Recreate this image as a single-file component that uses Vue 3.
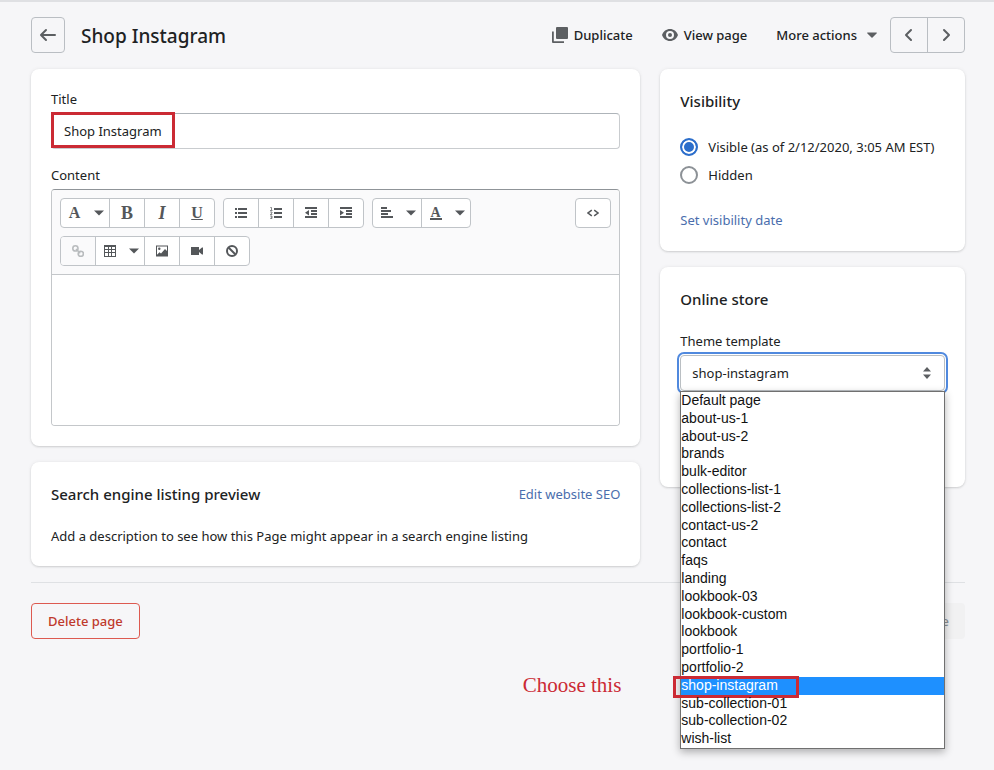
<script setup>
import { ref } from 'vue'

const title = ref('Shop Instagram')
const content = ref('')
const visibility = ref('visible')
const template = ref('shop-instagram')
const templates = [
  'Default page', 'about-us-1', 'about-us-2', 'brands', 'bulk-editor',
  'collections-list-1', 'collections-list-2', 'contact-us-2', 'contact', 'faqs',
  'landing', 'lookbook-03', 'lookbook-custom', 'lookbook', 'portfolio-1',
  'portfolio-2', 'shop-instagram', 'sub-collection-01', 'sub-collection-02', 'wish-list',
]
</script>

<template>
  <main class="page">
    <header class="header">
      <button class="back" aria-label="Back">
        <svg viewBox="0 0 20 20" width="20" height="20"><path d="M17 9H5.414l3.293-3.293a.999.999 0 1 0-1.414-1.414l-5 5a.999.999 0 0 0 0 1.414l5 5a.997.997 0 0 0 1.414 0 .999.999 0 0 0 0-1.414L5.414 11H17a1 1 0 1 0 0-2z" /></svg>
      </button>
      <h1>Shop Instagram</h1>
      <nav class="actions">
        <button class="action">
          <svg viewBox="0 0 16 16" width="16" height="16"><path d="M5 0h10a1 1 0 0 1 1 1v10a1 1 0 0 1-1 1H5a1 1 0 0 1-1-1V1a1 1 0 0 1 1-1z" /><path d="M0 4.500h1.800v9.700H12V16H1a1 1 0 0 1-1-1z" /></svg>
          Duplicate
        </button>
        <button class="action">
          <svg viewBox="0 0 16 16" width="16" height="16"><path fill-rule="evenodd" d="M8 2c3.700 0 6.700 2.300 8 6-1.300 3.700-4.300 6-8 6S1.300 11.700 0 8c1.300-3.700 4.300-6 8-6zm0 2a4 4 0 1 0 0 8 4 4 0 0 0 0-8z" /><circle cx="8" cy="8" r="2" /></svg>
          View page
        </button>
        <button class="action more">
          More actions
          <svg viewBox="0 0 10 6" width="10" height="6"><path d="M.6.500h8.800a.5.5 0 0 1 .4.800L5.500 5.400a.7.7 0 0 1-1 0L.2 1.300A.5.500 0 0 1 .6.500z" /></svg>
        </button>
      </nav>
      <div class="pager">
        <button aria-label="Previous page"><svg viewBox="0 0 20 20" width="20" height="20"><path d="M12 16a.997.997 0 0 1-.707-.293l-5-5a.999.999 0 0 1 0-1.414l5-5a.999.999 0 1 1 1.414 1.414L8.414 10l4.293 4.293A.999.999 0 0 1 12 16z" /></svg></button>
        <button aria-label="Next page"><svg viewBox="0 0 20 20" width="20" height="20"><path d="M8 16a.999.999 0 0 1-.707-1.707L11.586 10 7.293 5.707a.999.999 0 1 1 1.414-1.414l5 5a.999.999 0 0 1 0 1.414l-5 5A.997.997 0 0 1 8 16z" /></svg></button>
      </div>
    </header>

    <div class="layout">
      <div class="column">
        <section class="card">
          <label class="label" for="title">Title</label>
          <div class="title-field">
            <input id="title" v-model="title" type="text">
            <span class="mark title-mark"></span>
          </div>
          <label class="label" for="content">Content</label>
          <div class="editor">
            <div class="toolbar">
              <div class="toolrow">
                <div class="group">
                  <button class="wide" aria-label="Formatting"><span class="glyph">A</span><svg class="caret" viewBox="0 0 10 6" width="10" height="6"><path d="M0 .500h10L5 5.500z" /></svg></button>
                  <button aria-label="Bold"><span class="glyph big">B</span></button>
                  <button aria-label="Italic"><span class="glyph big italic">I</span></button>
                  <button aria-label="Underline"><span class="glyph under">U</span></button>
                </div>
                <div class="group">
                  <button aria-label="Bulleted list"><svg viewBox="0 0 12 12" width="12" height="12"><path d="M0 1h2v2H0zM3 1h9v2H3zM0 5h2v2H0zM3 5h9v2H3zM0 9h2v2H0zM3 9h9v2H3z" /></svg></button>
                  <button aria-label="Numbered list"><svg viewBox="0 0 12 12" width="12" height="12"><path d="M4 1h8v2H4zM4 5h8v2H4zM4 9h8v2H4z" /><path d="M.3.500h1.200V3M0 3.500h2.500M.2 5h1.800v1L.3 7.500h2M.2 9h1.800v2.500H.2M.8 10.200H2" fill="none" stroke="currentColor" stroke-width=".7" /></svg></button>
                  <button aria-label="Outdent"><svg viewBox="0 0 12 12" width="12" height="12"><path d="M0 0h12v2H0zM6 3h6v2H6zM6 6h6v2H6zM0 9h12v2H0zM4 3v5.500L0 5.700z" /></svg></button>
                  <button aria-label="Indent"><svg viewBox="0 0 12 12" width="12" height="12"><path d="M0 0h12v2H0zM6 3h6v2H6zM6 6h6v2H6zM0 9h12v2H0zM0 3v5.500l4-2.800z" /></svg></button>
                </div>
                <div class="group">
                  <button class="wide" aria-label="Alignment"><svg viewBox="0 0 12 12" width="12" height="12"><path d="M0 0h6v2H0zM0 3h10v2H0zM0 6h7v2H0zM0 9h12v2H0z" /></svg><svg class="caret" viewBox="0 0 10 6" width="10" height="6"><path d="M0 .500h10L5 5.500z" /></svg></button>
                  <button class="wide" aria-label="Color"><span class="glyph color">A</span><svg class="caret" viewBox="0 0 10 6" width="10" height="6"><path d="M0 .500h10L5 5.500z" /></svg></button>
                </div>
                <div class="group end">
                  <button aria-label="Show HTML"><svg viewBox="0 0 12 12" width="12" height="12"><path d="M4.800 3.200L1 6l3.800 2.800M7.200 3.200L11 6 7.200 8.800" fill="none" stroke="currentColor" stroke-width="1.500" /></svg></button>
                </div>
              </div>
              <div class="toolrow">
                <div class="group">
                  <button class="off" disabled aria-label="Insert link"><svg viewBox="0 0 12 12" width="12" height="12"><g fill="none" stroke="currentColor" stroke-width="1.600"><circle cx="3.400" cy="3.400" r="2.600" /><circle cx="8.800" cy="8.800" r="2.600" /><path d="M4 4l4.200 4.200" /></g></svg></button>
                  <button class="wide" aria-label="Insert table"><svg viewBox="0 0 12 12" width="12" height="12"><path fill-rule="evenodd" d="M0 0h12v12H0zM1 2v2h3V2zM5 2v2h2V2zM8 2v2h3V2zM1 5v2h3V5zM5 5v2h2V5zM8 5v2h3V5zM1 8v3h3V8zM5 8v3h2V8zM8 8v3h3V8z" /></svg><svg class="caret" viewBox="0 0 10 6" width="10" height="6"><path d="M0 .500h10L5 5.500z" /></svg></button>
                  <button aria-label="Insert image"><svg viewBox="0 0 12 12" width="12" height="12"><path fill-rule="evenodd" d="M0 .500h12v11H0zM1 1.500v8.300l2.500-2.600 1.500 1.300L9 4l2 2V1.500z" /><circle cx="3.300" cy="3.800" r="1.200" /></svg></button>
                  <button aria-label="Insert video"><svg viewBox="0 0 12 12" width="12" height="12"><path d="M0 2h8v3l3-2.500h1v7h-1L8 7v3H0z" /></svg></button>
                  <button aria-label="Clear formatting"><svg viewBox="0 0 12 12" width="12" height="12"><g fill="none" stroke="currentColor" stroke-width="2"><circle cx="6" cy="6" r="5" /><path d="M2.500 2.500l7 7" /></g></svg></button>
                </div>
              </div>
            </div>
            <textarea id="content" v-model="content"></textarea>
          </div>
        </section>

        <section class="card seo">
          <div class="card-head">
            <h2>Search engine listing preview</h2>
            <a href="#">Edit website SEO</a>
          </div>
          <p>Add a description to see how this Page might appear in a search engine listing</p>
        </section>
      </div>

      <div class="column">
        <section class="card visibility">
          <h2>Visibility</h2>
          <div class="choices">
            <label class="choice"><input v-model="visibility" type="radio" name="visibility" value="visible">Visible (as of 2/12/2020, 3:05 AM EST)</label>
            <label class="choice"><input v-model="visibility" type="radio" name="visibility" value="hidden">Hidden</label>
          </div>
          <a href="#">Set visibility date</a>
        </section>

        <section class="card store">
          <h2>Online store</h2>
          <label class="label" for="template">Theme template</label>
          <div class="select">
            <select id="template" v-model="template">
              <option v-for="name in templates" :key="name">{{ name }}</option>
            </select>
            <svg class="sort" viewBox="0 0 8 12" width="8" height="12"><path d="M4 0l4 4.500H0zM4 12L0 7.500h8z" /></svg>
            <ul class="menu" role="listbox" aria-label="Theme template">
              <li v-for="name in templates" :key="name" role="option" :aria-selected="name === template" :class="{ selected: name === template }" @click="template = name">
                {{ name }}
                <template v-if="name === template">
                  <span class="mark option-mark"></span>
                  <span class="note">Choose this</span>
                </template>
              </li>
            </ul>
          </div>
        </section>
      </div>
    </div>

    <footer class="footer">
      <button class="delete">Delete page</button>
      <button class="save" disabled>Save</button>
    </footer>
  </main>
</template>

<style>
body {
  background: #f6f6f8;
}
</style>

<style scoped>
* {
  box-sizing: border-box;
}

.page {
  min-height: 100vh;
  padding: 15px 29px 20px 31px;
  border-top: 2px solid #dfe0e3;
  color: #202223;
  font: 13px/20px "Noto Sans", "Open Sans", sans-serif;
}

button,
input,
select,
textarea {
  margin: 0;
  padding: 0;
  color: inherit;
  font: inherit;
}

button {
  display: flex;
  align-items: center;
  justify-content: center;
  border: 0;
  background: none;
}

svg {
  display: block;
  flex: none;
  fill: currentColor;
}

h1,
h2,
p {
  margin: 0;
}

h1 {
  margin-left: 16px;
  padding-top: 2px;
  font-size: 19px;
  font-weight: 500;
  line-height: 28px;
}

h2 {
  font-size: 15px;
  font-weight: 500;
  line-height: 24px;
}

a {
  color: #4a6ead;
  text-decoration: none;
}

.header {
  display: flex;
  align-items: center;
  height: 36px;
  margin-bottom: 16px;
}

.back {
  width: 34px;
  height: 36px;
  border: 1px solid #babec3;
  border-radius: 4px;
  color: #5c5f62;
}

.actions {
  display: flex;
  gap: 29px;
  margin-left: auto;
}

.action {
  gap: 6px;
  font-weight: 500;
}

.action svg {
  color: #5c5f62;
}

.more {
  gap: 10px;
}

.pager {
  display: flex;
  margin-left: 13px;
  border: 1px solid #babec3;
  border-radius: 4px;
  color: #5c5f62;
}

.pager button {
  width: 36px;
  height: 34px;
}

.pager button + button {
  width: 37px;
  border-left: 1px solid #babec3;
}

.layout {
  display: grid;
  grid-template-columns: 2fr 1fr;
  gap: 20px;
  align-items: start;
}

.column {
  display: grid;
  gap: 16px;
  min-width: 0;
}

.card {
  padding: 20px;
  border-radius: 8px;
  background: #fff;
  box-shadow: 0 1px 2px rgba(23, 24, 24, 0.15), 0 0 4px rgba(23, 24, 24, 0.06);
}

.label {
  display: block;
  margin-bottom: 4px;
}

.title-field {
  position: relative;
  margin-bottom: 16px;
}

.title-field input {
  display: block;
  width: 100%;
  height: 36px;
  padding: 0 12px;
  border: 1px solid #c9cccf;
  border-top-color: #aeb4b9;
  border-radius: 4px;
  background: #fff;
}

.mark {
  position: absolute;
  border: 3px solid #cb2a34;
  pointer-events: none;
}

.title-mark {
  top: -1px;
  left: 0;
  width: 124px;
  height: 36px;
}

.editor {
  overflow: hidden;
  border: 1px solid #c4c7ca;
  border-top-color: #8f9498;
  border-radius: 4px;
}

.toolbar {
  display: grid;
  gap: 8px;
  padding: 8px;
  border-bottom: 1px solid #c4c7ca;
  background: #fafafb;
}

.toolrow {
  display: flex;
  gap: 8px;
}

.group {
  display: flex;
  border: 1px solid #c0c4c8;
  border-radius: 4px;
  background: #fff;
  color: #54575a;
}

.group button {
  box-sizing: content-box;
  width: 34px;
  height: 28px;
}

.group .wide {
  gap: 13px;
  width: 46px;
  padding-left: 2px;
}

.group button + button {
  border-left: 1px solid #c0c4c8;
}

.group .off {
  border-radius: 3px 0 0 3px;
  color: #b9bcbe;
  background: #fafafb;
}

.end {
  margin-left: auto;
}

.glyph {
  width: 12px;
  font: bold 16px/18px "Liberation Serif", serif;
  text-align: center;
}

.big {
  font-size: 18px;
}

.italic {
  font-style: italic;
}

.under {
  text-decoration: underline;
}

.color {
  border-bottom: 2px solid currentColor;
  font-size: 14px;
  line-height: 11px;
}

textarea {
  display: block;
  width: 100%;
  height: 150px;
  padding: 10px;
  border: 0;
  outline: 0;
  resize: none;
}

.card-head {
  display: flex;
  align-items: center;
  justify-content: space-between;
  margin-bottom: 20px;
}

.choices {
  display: grid;
  gap: 8px;
  margin: 24px 0 25px;
}

.choice {
  display: flex;
  align-items: center;
  gap: 10px;
}

.choice input {
  width: 18px;
  height: 18px;
  border: 2px solid #8c9196;
  border-radius: 50%;
  background: #fff;
  appearance: none;
}

.choice input:checked {
  border-color: #2c6ecb;
  background: #2c6ecb;
  box-shadow: inset 0 0 0 2px #fff;
}

.visibility {
  padding-bottom: 21px;
}

.store {
  padding-bottom: 96px;
}

.store .label {
  margin-top: 20px;
}

.select {
  position: relative;
}

.select select {
  display: block;
  width: 100%;
  height: 36px;
  padding: 0 11px;
  border: 1px solid #babfc3;
  border-radius: 4px;
  outline: 2px solid #5089de;
  outline-offset: 1px;
  background: #fff;
  appearance: none;
}

.sort {
  position: absolute;
  top: 12px;
  right: 14px;
  color: #5c5f62;
  pointer-events: none;
}

.menu {
  position: absolute;
  top: 100%;
  right: 0;
  left: 0;
  display: grid;
  grid-template-rows: repeat(20, 1fr);
  height: 358px;
  margin: 0;
  padding: 0;
  border: 1px solid #707070;
  background: #fff;
  box-shadow: 0 3px 8px rgba(0, 0, 0, 0.3);
  color: #111;
  font: 14px/17px "Liberation Sans", Arial, sans-serif;
  list-style: none;
}

.menu li {
  position: relative;
}

.menu .selected {
  background: #1e90ff;
  color: #fff;
}

.option-mark {
  top: -1px;
  left: -8px;
  width: 126px;
  height: 22px;
}

.note {
  position: absolute;
  top: -3px;
  right: calc(100% + 60px);
  color: #cb2a34;
  font: 21px/22px "Liberation Serif", serif;
  white-space: nowrap;
}

.footer {
  display: flex;
  justify-content: space-between;
  margin-top: 16px;
  padding-top: 20px;
  border-top: 1px solid #dfe1e4;
}

.footer button {
  height: 36px;
  padding: 0 16px;
  border-radius: 4px;
  font-weight: 500;
}

.footer .delete {
  border: 1px solid #dd5a50;
  color: #bf3a2c;
}

.footer .save {
  background: #f1f1f2;
  color: #8c9196;
}
</style>
